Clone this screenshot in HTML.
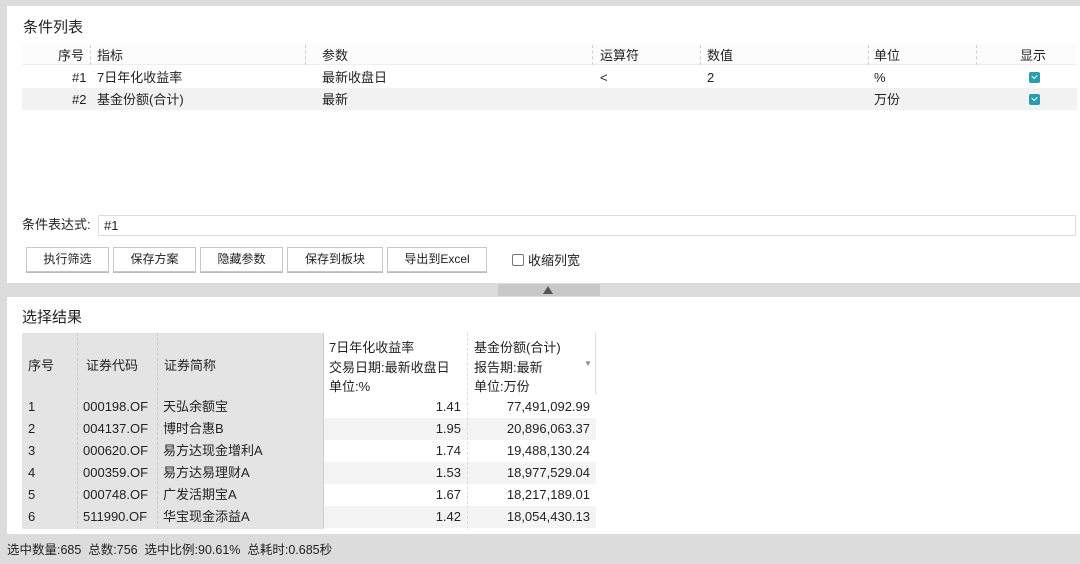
<!DOCTYPE html>
<html><head><meta charset="utf-8"><style>
*{margin:0;padding:0;box-sizing:border-box}
body{width:1080px;height:564px;background:#dcdcdc;font-family:"Liberation Sans","Noto Sans CJK SC",sans-serif;font-size:13px;line-height:16px;color:#222;position:relative;overflow:hidden}
.a{position:absolute;white-space:nowrap}
.p{position:absolute;background:#fff}
.btn{position:absolute;top:247px;height:25px;border:1px solid #c8c8c8;background:#fff;text-align:center;line-height:23px;font-size:12px;box-shadow:0 1px 0 #bbb}
.cb{position:absolute;width:11px;height:11px;border-radius:2px;background:#2a9bb0;left:1029px}
.cb:after{content:"";position:absolute;left:3px;top:2px;width:4px;height:3px;border-left:1.5px solid #fff;border-bottom:1.5px solid #fff;transform:rotate(-45deg)}
.sep{position:absolute;top:45px;height:20px;border-left:1px dashed #ccc}
td{height:22px;padding:0 6px;white-space:nowrap;line-height:22px}
</style></head><body>
<div class="p" style="left:7px;top:6px;width:1073px;height:277px"></div>
<div class="a" style="left:23px;top:19px;font-size:15px;line-height:18px">条件列表</div>
<div class="a" style="left:22px;top:43px;width:1055px;height:22px;border-bottom:1px solid #eee;background:#fcfcfc"></div>
<div class="sep" style="left:90px"></div><div class="sep" style="left:305px"></div><div class="sep" style="left:592px"></div><div class="sep" style="left:700px"></div><div class="sep" style="left:868px"></div><div class="sep" style="left:976px"></div>
<div class="a" style="left:58px;top:48px">序号</div>
<div class="a" style="left:97px;top:48px">指标</div>
<div class="a" style="left:322px;top:48px">参数</div>
<div class="a" style="left:600px;top:48px">运算符</div>
<div class="a" style="left:707px;top:48px">数值</div>
<div class="a" style="left:874px;top:48px">单位</div>
<div class="a" style="left:1020px;top:48px">显示</div>
<div class="a" style="left:22px;top:88px;width:1055px;height:22px;background:#f2f2f2"></div>
<div class="a" style="left:72px;top:70px">#1</div><div class="a" style="left:97px;top:70px">7日年化收益率</div><div class="a" style="left:322px;top:70px">最新收盘日</div><div class="a" style="left:600px;top:70px">&lt;</div><div class="a" style="left:707px;top:70px">2</div><div class="a" style="left:874px;top:70px">%</div>
<div class="cb" style="top:72px"></div>
<div class="a" style="left:72px;top:92px">#2</div><div class="a" style="left:97px;top:92px">基金份额(合计)</div><div class="a" style="left:322px;top:92px">最新</div><div class="a" style="left:874px;top:92px">万份</div>
<div class="cb" style="top:94px"></div>
<div class="a" style="left:22px;top:217px">条件表达式:</div>
<div class="a" style="left:98px;top:215px;width:978px;height:21px;border:1px solid #ddd;padding:2px 5px">#1</div>
<div class="btn" style="left:26px;width:83px">执行筛选</div>
<div class="btn" style="left:113px;width:83px">保存方案</div>
<div class="btn" style="left:200px;width:83px">隐藏参数</div>
<div class="btn" style="left:287px;width:96px">保存到板块</div>
<div class="btn" style="left:387px;width:100px">导出到Excel</div>
<div class="a" style="left:512px;top:254px;width:12px;height:12px;border:1px solid #777;border-radius:2px"></div>
<div class="a" style="left:528px;top:253px">收缩列宽</div>
<div class="a" style="left:498px;top:284px;width:102px;height:12px;background:#c8c8c8"></div>
<div class="a" style="left:543px;top:286px;width:0;height:0;border-left:5px solid transparent;border-right:5px solid transparent;border-bottom:8px solid #555"></div>
<div class="p" style="left:7px;top:297px;width:1073px;height:237px"></div>
<div class="a" style="left:22px;top:309px;font-size:15px;line-height:18px">选择结果</div>
<div class="a" style="left:22px;top:333px;width:301px;height:196px;background:#e4e4e4"></div>
<div class="a" style="left:323px;top:333px;width:273px;height:61px;background:#fff;border-right:1px solid #ddd"></div>
<div class="a" style="left:323px;top:418px;width:273px;height:22px;background:#f4f4f4"></div>
<div class="a" style="left:323px;top:462px;width:273px;height:22px;background:#f4f4f4"></div>
<div class="a" style="left:323px;top:506px;width:273px;height:22px;background:#f4f4f4"></div>
<div class="a" style="left:77px;top:333px;height:196px;border-left:1px dashed #c8c8c8"></div>
<div class="a" style="left:157px;top:333px;height:196px;border-left:1px dashed #c8c8c8"></div>
<div class="a" style="left:323px;top:333px;height:196px;border-left:1px solid #ccc"></div>
<div class="a" style="left:467px;top:333px;height:196px;border-left:1px dashed #ddd"></div>
<div class="a" style="left:28px;top:358px">序号</div><div class="a" style="left:86px;top:358px">证券代码</div><div class="a" style="left:164px;top:358px">证券简称</div>
<div class="a" style="left:329px;top:338px;line-height:19.5px">7日年化收益率<br>交易日期:最新收盘日<br>单位:%</div>
<div class="a" style="left:474px;top:338px;line-height:19.5px">基金份额(合计)<br>报告期:最新<br>单位:万份</div>
<div class="a" style="left:584px;top:356px;font-size:8px;color:#888">▼</div>
<div class="a" style="left:22px;top:396px">
<table style="border-collapse:collapse;font-size:13px">
<tr><td style="width:55px">1</td><td style="width:80px">000198.OF</td><td style="width:166px">天弘余额宝</td><td style="width:144px;text-align:right">1.41</td><td style="width:129px;text-align:right">77,491,092.99</td></tr>
<tr><td>2</td><td>004137.OF</td><td>博时合惠B</td><td style="text-align:right">1.95</td><td style="text-align:right">20,896,063.37</td></tr>
<tr><td>3</td><td>000620.OF</td><td>易方达现金增利A</td><td style="text-align:right">1.74</td><td style="text-align:right">19,488,130.24</td></tr>
<tr><td>4</td><td>000359.OF</td><td>易方达易理财A</td><td style="text-align:right">1.53</td><td style="text-align:right">18,977,529.04</td></tr>
<tr><td>5</td><td>000748.OF</td><td>广发活期宝A</td><td style="text-align:right">1.67</td><td style="text-align:right">18,217,189.01</td></tr>
<tr><td>6</td><td>511990.OF</td><td>华宝现金添益A</td><td style="text-align:right">1.42</td><td style="text-align:right">18,054,430.13</td></tr>
</table></div>
<div class="a" style="left:7px;top:542px;font-size:12.5px">选中数量:685&nbsp; 总数:756&nbsp; 选中比例:90.61%&nbsp; 总耗时:0.685秒</div>
</body></html>
